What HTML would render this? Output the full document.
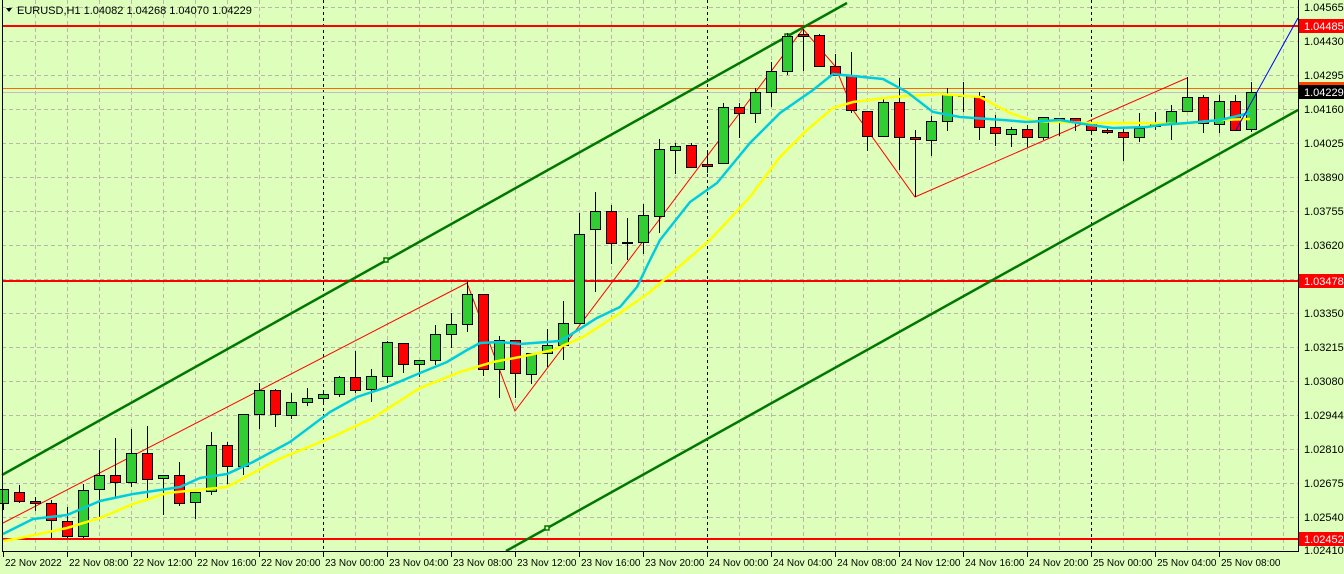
<!DOCTYPE html>
<html><head><meta charset="utf-8"><style>
html,body{margin:0;padding:0;background:#DDFFBB;}
svg{display:block;font-family:"Liberation Sans",sans-serif;font-size:11px;}
#tl text{font-size:10px;}
</style></head><body>
<svg id="c" width="1344" height="574" xmlns="http://www.w3.org/2000/svg">
<rect width="1344" height="574" fill="#DDFFBB"/>
<g id="grid" stroke="#B8B8A8" stroke-width="1" stroke-dasharray="4,3"></g>
<g id="day" stroke="#000" stroke-width="1" stroke-dasharray="3,3">
<line x1="323.5" y1="0" x2="323.5" y2="551"/><line x1="707.5" y1="0" x2="707.5" y2="551"/><line x1="1091.5" y1="0" x2="1091.5" y2="551"/>
</g>
<line x1="2" y1="92.5" x2="1298" y2="92.5" stroke="#C0C0C0"/>
<line x1="2" y1="88.5" x2="1298" y2="88.5" stroke="#FF6600" stroke-width="1"/>
<g stroke="#FF0000" stroke-width="2">
<line x1="2" y1="26" x2="1298" y2="26"/><line x1="2" y1="281" x2="1298" y2="281"/><line x1="2" y1="539" x2="1298" y2="539"/>
</g>
<g stroke="#007700" stroke-width="2.5" fill="none">
<line x1="2" y1="475" x2="847" y2="3"/><line x1="506" y1="551" x2="1298" y2="110"/>
<rect x="384" y="258" width="4" height="4" fill="#DDFFBB" stroke-width="1.5"/>
<rect x="785" y="34" width="4" height="4" fill="#DDFFBB" stroke-width="1.5"/>
<rect x="545" y="526" width="4" height="4" fill="#DDFFBB" stroke-width="1.5"/>
</g>
<polyline fill="none" stroke="#FF0000" stroke-width="1" points="3,523 467,283 515,411 803,29 835,66 853,110 915,197 1187,78"/>
<g id="candles"></g>
<polyline fill="none" stroke="#FFFF00" stroke-width="2.5" points="3,541 20,538 67,528 100,518 133,504 167,493 227,487 253,473 277,460 330,438 373,418 420,388 460,372 493,362 520,357 553,350 583,337 620,313 650,292 710,240 750,197 780,157 807,130 833,108 853,102 893,97 940,94 980,97 1010,113 1033,121 1093,123 1140,123 1180,124 1220,120 1250,119"/>
<polyline fill="none" stroke="#00CCDD" stroke-width="2.5" points="3,534 33,519 67,515 100,501 133,494 167,489 180,487 200,478 227,474 253,462 290,442 330,412 357,397 387,387 420,373 447,362 467,350 480,343 500,342 520,344 560,341 570,335 597,318 620,307 637,287 650,260 660,240 690,202 717,183 750,143 780,113 813,90 833,74 853,76 883,79 907,92 933,112 960,117 1003,120 1027,122 1060,120 1090,125 1113,128 1147,127 1160,125 1187,123 1220,120 1250,113"/>
<line x1="1236" y1="130" x2="1298" y2="18" stroke="#0000FF" stroke-width="1"/>
<rect x="1298" y="0" width="46" height="574" fill="#DDFFBB"/>
<rect x="0" y="551" width="1344" height="23" fill="#DDFFBB"/>
<line x1="2.5" y1="0" x2="2.5" y2="552" stroke="#000"/>
<line x1="1298.5" y1="0" x2="1298.5" y2="552" stroke="#000"/>
<line x1="2" y1="551.5" x2="1299" y2="551.5" stroke="#000"/>
<g id="ticks" stroke="#000"></g>
<g fill="#000">
<text x="1304" y="11">1.04565</text><text x="1304" y="45">1.04430</text><text x="1304" y="79">1.04295</text>
<text x="1304" y="113">1.04160</text><text x="1304" y="147">1.04025</text><text x="1304" y="181">1.03890</text>
<text x="1304" y="215">1.03755</text><text x="1304" y="249">1.03620</text><text x="1304" y="317">1.03350</text>
<text x="1304" y="351">1.03215</text><text x="1304" y="385">1.03080</text><text x="1304" y="419">1.02944</text>
<text x="1304" y="453">1.02810</text><text x="1304" y="487">1.02675</text><text x="1304" y="521">1.02540</text>
<text x="1304" y="554">1.02410</text>
</g>
<rect x="1299" y="19" width="45" height="14" fill="#FF0000"/><text x="1304" y="30" fill="#fff">1.04485</text>
<rect x="1299" y="82" width="45" height="8" fill="#FF4400"/>
<rect x="1299" y="85" width="45" height="14" fill="#000"/><text x="1304" y="96" fill="#fff">1.04229</text>
<rect x="1299" y="274" width="45" height="14" fill="#FF0000"/><text x="1304" y="285" fill="#fff">1.03478</text>
<rect x="1299" y="532" width="45" height="14" fill="#FF0000"/><text x="1304" y="543" fill="#fff">1.02452</text>
<g id="tl" fill="#000"></g>
<path d="M6,8 L12,8 L9,12 Z" fill="#000"/>
<text x="17" y="14" fill="#000">EURUSD,H1  1.04082 1.04268 1.04070 1.04229</text>
</svg>
<script>
var NS="http://www.w3.org/2000/svg";
function el(p,t,a){var e=document.createElementNS(NS,t);for(var k in a)e.setAttribute(k,a[k]);p.appendChild(e);return e;}
var g=document.getElementById('grid');
[7,41,75,109,143,177,211,245,279,313,347,381,415,449,483,517].forEach(function(y){el(g,'line',{x1:2,y1:y+.5,x2:1298,y2:y+.5});});
for(var x=35;x<1298;x+=32){if(x==323||x==707||x==1091)continue;el(g,'line',{x1:x+.5,y1:0,x2:x+.5,y2:551});}
var C=[
['g',489,503,489,510],['r',492,501,485,503],['r',501,503,497,511],['r',503,520,500,538],['r',521,536,507,538],
['g',490,536,484,538],['g',475,489,450,517],['r',475,482,438,499],['g',453,482,429,487],['r',453,479,426,499],
['g',475,478,475,515],['r',475,503,462,506],['g',492,502,492,519],['g',445,491,432,495],['r',445,466,442,484],
['g',414,466,414,475],['g',390,414,383,429],['r',390,414,389,427],['g',402,415,393,419],['g',398,402,388,406],
['g',394,398,390,402],['g',377,394,376,397],['r',377,390,351,393],['g',376,389,369,402],['g',342,376,341,383],
['r',343,364,343,373],['g',360,364,360,377],['g',334,360,325,365],['g',324,334,313,348],['g',294,324,281,332],
['r',294,369,294,376],['g',340,369,336,398],['r',340,373,340,398],['g',353,374,353,384],['g',345,353,329,367],
['g',323,345,301,360],['g',234,323,213,323],['g',211,229,192,292],['r',211,243,205,264],['r',242,243,218,260],
['g',215,242,204,254],['g',149,216,139,233],['g',146,150,143,174],['r',145,167,143,167],['r',164,166,153,173],
['g',107,163,103,163],['r',107,113,103,138],['g',92,113,88,123],['g',71,92,62,107],['g',36,71,33,75],
['r',34,36,29,71],['r',35,66,34,67],['r',66,75,54,75],['r',75,110,52,113],['r',111,136,111,151],
['g',102,136,99,136],['r',102,137,78,170],['r',137,139,130,197],['g',121,140,116,156],['g',94,121,88,131],
['r',95,96,82,112],['r',96,127,92,140],['r',127,133,115,146],['g',129,134,127,147],['r',129,137,125,147],
['g',117,137,117,140],['r',118,120,118,136],['r',118,122,118,131],['r',123,130,120,135],['r',130,132,128,134],
['r',132,137,128,161],['g',128,137,113,142],['g',123,126,112,130],['g',111,123,105,140],['g',97,111,77,111],
['r',97,123,95,133],['g',101,124,95,133],['r',101,130,95,130],['g',92,129,82,132]];
var cg=document.getElementById('candles');
C.forEach(function(c,i){var x=3+16*i;
el(cg,'line',{x1:x+.5,y1:c[3],x2:x+.5,y2:c[4],stroke:'#000','stroke-width':1});
var h=Math.max(c[2]-c[1],1);
el(cg,'rect',{x:x-4.5,y:c[1]+.5,width:10,height:h,fill:c[0]=='g'?'#32CD32':'#FF0000',stroke:'#000','stroke-width':1});});
var lab=["22 Nov 2022","22 Nov 08:00","22 Nov 12:00","22 Nov 16:00","22 Nov 20:00","23 Nov 00:00","23 Nov 04:00","23 Nov 08:00","23 Nov 12:00","23 Nov 16:00","23 Nov 20:00","24 Nov 00:00","24 Nov 04:00","24 Nov 08:00","24 Nov 12:00","24 Nov 16:00","24 Nov 20:00","25 Nov 00:00","25 Nov 04:00","25 Nov 08:00"];
var tl=document.getElementById('tl'),tk=document.getElementById('ticks');
lab.forEach(function(s,i){var x=3+64*i;el(tk,'line',{x1:x+.5,y1:552,x2:x+.5,y2:557});var t=el(tl,'text',{x:x+2,y:566});t.textContent=s;});
</script>
</body></html>
